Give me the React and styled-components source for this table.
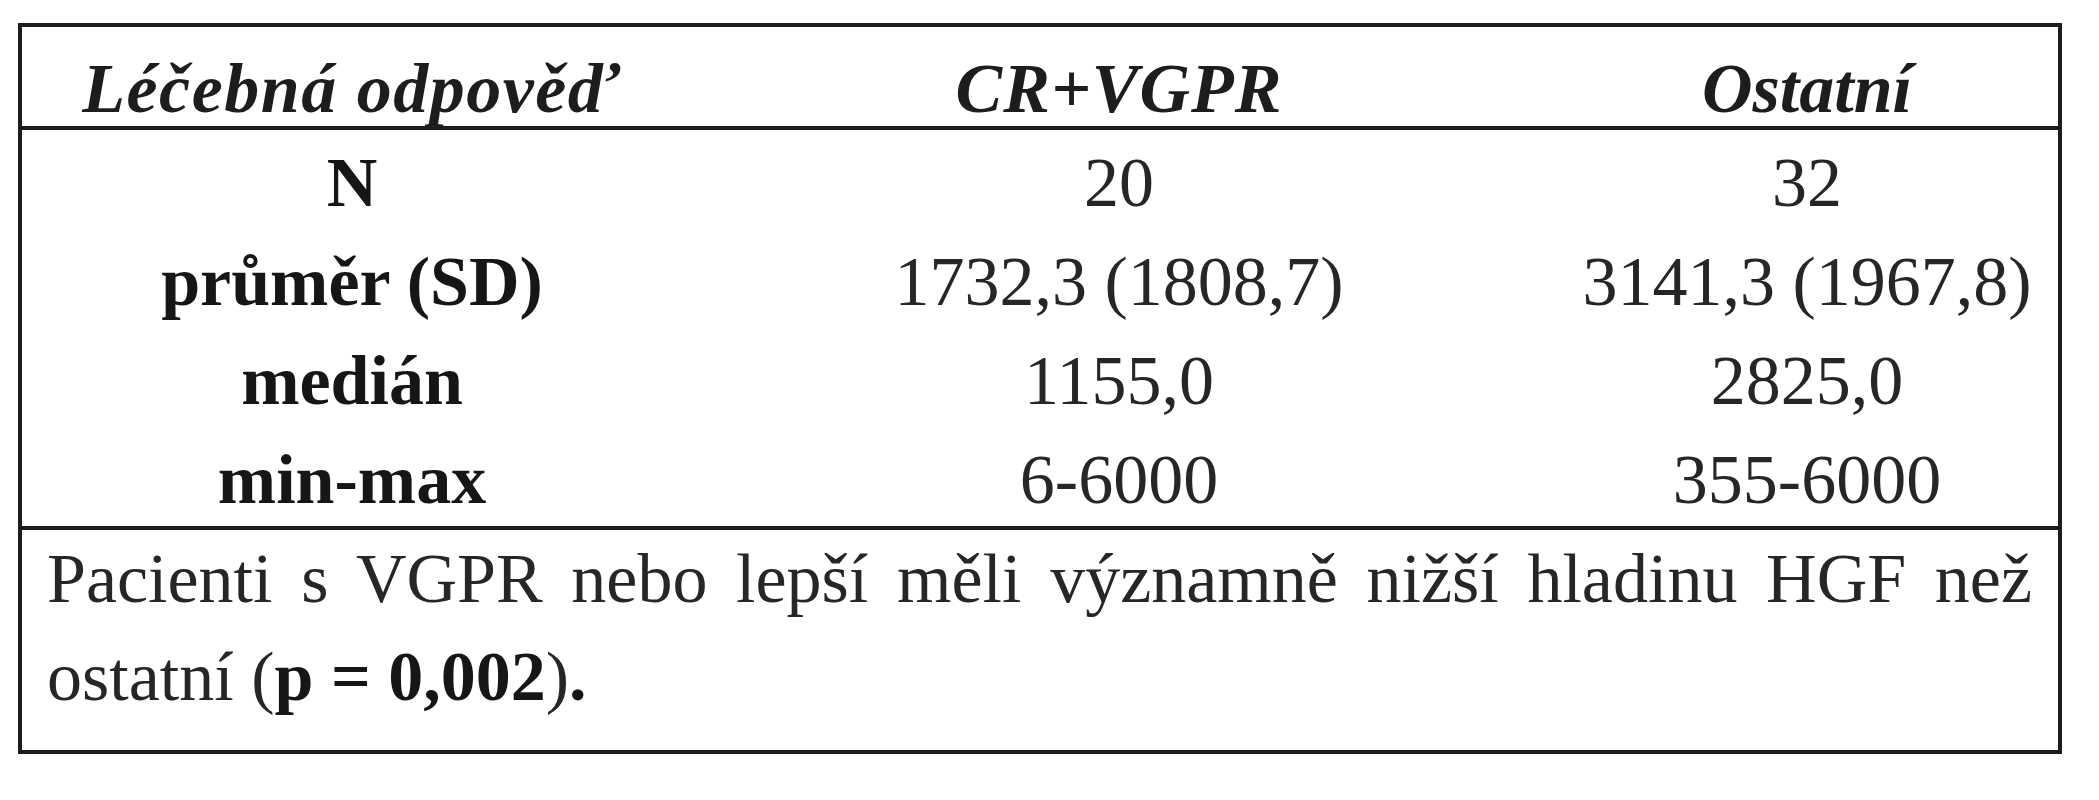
import React from 'react'
import styled, { createGlobalStyle } from 'styled-components'

const GlobalStyle = createGlobalStyle`
  html, body {
    margin: 0;
    padding: 0;
    background: #ffffff;
  }
  body {
    font-family: "Liberation Serif", "Times New Roman", serif;
    color: #1d1d1d;
  }
`

const Page = styled.div`
  padding: 23px 0 0 18px;
`

const TableBox = styled.div`
  width: 2044px;
  box-sizing: border-box;
  border: 4px solid #1c1c1c;
  font-family: "Liberation Serif", "Times New Roman", serif;
  font-size: 70px;
`

const Row = styled.div`
  display: grid;
  grid-template-columns: 660px 874px 1fr;
  text-align: center;
  white-space: nowrap;
`

const HeaderRow = styled(Row)`
  height: 103px;
  box-sizing: border-box;
  padding-top: 20px;
  line-height: 83px;
  border-bottom: 4px solid #1c1c1c;
`

const HeadCell = styled.div`
  font-weight: bold;
  font-style: italic;
  letter-spacing: ${p => p.$spread || '0'};
`

const BodyRows = styled.div`
  border-bottom: 4px solid #1c1c1c;
`

const BodyRow = styled(Row)`
  height: 99px;
  box-sizing: border-box;
  padding-top: 6px;
  line-height: 93px;
`

const Cell = styled.div`
  font-weight: ${p => (p.$label ? 'bold' : 'normal')};
  color: ${p => (p.$label ? '#161616' : '#262626')};
`

const Note = styled.div`
  height: 220px;
  box-sizing: border-box;
  padding: 0 26px 0 25px;
  line-height: 98px;
  color: #262626;
`

const NoteLine = styled.div`
  text-align: justify;
  text-align-last: justify;
  white-space: nowrap;
`

const NoteEnd = styled.div`
  text-align: left;
  white-space: nowrap;
`

const Strong = styled.b`
  font-weight: bold;
  color: #161616;
`

const rows = [
  ['N', '20', '32'],
  ['průměr (SD)', '1732,3 (1808,7)', '3141,3 (1967,8)'],
  ['medián', '1155,0', '2825,0'],
  ['min-max', '6-6000', '355-6000'],
]

export default function App() {
  return (
    <Page>
      <GlobalStyle />
      <TableBox>
        <HeaderRow>
          <HeadCell $spread="1.5px">Léčebná odpověď</HeadCell>
          <HeadCell $spread="1px">CR+VGPR</HeadCell>
          <HeadCell>Ostatní</HeadCell>
        </HeaderRow>
        <BodyRows>
          {rows.map(r => (
            <BodyRow key={r[0]}>
              <Cell $label>{r[0]}</Cell>
              <Cell>{r[1]}</Cell>
              <Cell>{r[2]}</Cell>
            </BodyRow>
          ))}
        </BodyRows>
        <Note>
          <NoteLine>Pacienti s VGPR nebo lepší měli významně nižší hladinu HGF než</NoteLine>
          <NoteEnd>
            ostatní (<Strong>p = 0,002</Strong>)<Strong>.</Strong>
          </NoteEnd>
        </Note>
      </TableBox>
    </Page>
  )
}
